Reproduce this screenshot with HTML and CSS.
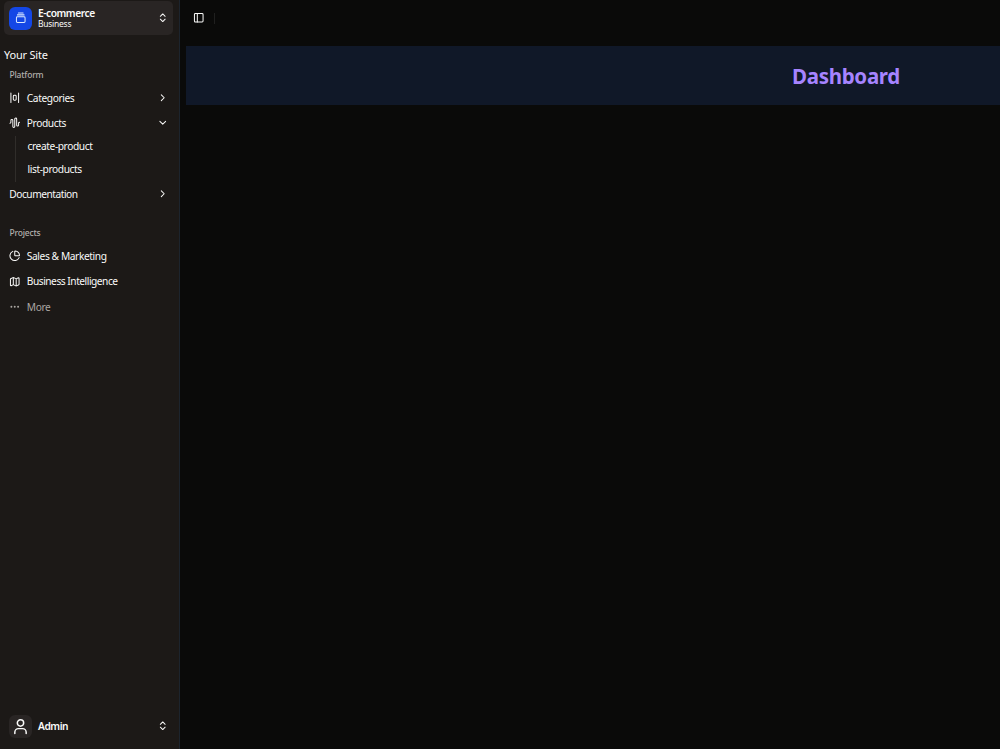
FILE: index.html
```html
<!DOCTYPE html>
<html lang="en">
<head>
<meta charset="utf-8">
<title>Dashboard</title>
<link rel="stylesheet" href="styles.css">
</head>
<body>
<div class="app">
  <aside class="sidebar">
    <div class="switcher team">
      <span class="logo blue"><svg class="icon" viewBox="0 0 24 24"><path d="M7 2h10M5 6h14"/><rect x="3" y="10" width="18" height="12" rx="2"/></svg></span>
      <span class="names"><b class="name commerce">E-commerce</b><span class="plan">Business</span></span>
      <svg class="icon end" viewBox="0 0 24 24"><path d="m7 15 5 5 5-5M7 9l5-5 5 5"/></svg>
    </div>
    <div class="site"><span>Your Site</span></div>
    <nav class="group">
      <div class="label">Platform</div>
      <a class="item"><svg class="icon" viewBox="0 0 24 24"><rect x="9" y="7" width="6" height="10" rx="2"/><path d="M4 22V2M20 22V2"/></svg><span class="text">Categories</span><svg class="icon end" viewBox="0 0 24 24"><path d="m9 18 6-6-6-6"/></svg></a>
      <a class="item"><svg class="icon" viewBox="0 0 24 24"><path d="M2 13a2 2 0 0 0 2-2V7a2 2 0 0 1 4 0v13a2 2 0 0 0 4 0V4a2 2 0 0 1 4 0v13a2 2 0 0 0 4 0v-4a2 2 0 0 1 2-2"/></svg><span class="text">Products</span><svg class="icon end" viewBox="0 0 24 24"><path d="m6 9 6 6 6-6"/></svg></a>
      <div class="sub"><a>create-product</a><a>list-products</a></div>
      <a class="item"><span class="text tight">Documentation</span><svg class="icon end" viewBox="0 0 24 24"><path d="m9 18 6-6-6-6"/></svg></a>
    </nav>
    <nav class="group projects">
      <div class="label">Projects</div>
      <a class="item"><svg class="icon" viewBox="0 0 24 24"><path d="M21 12c.552 0 1.005-.449.95-.998a10 10 0 0 0-8.953-8.951c-.55-.055-.998.398-.998.95v8a1 1 0 0 0 1 1z"/><path d="M21.21 15.89A10 10 0 1 1 8 2.83"/></svg><span class="text">Sales &amp; Marketing</span></a>
      <a class="item"><svg class="icon" viewBox="0 0 24 24"><path d="M14.106 5.553a2 2 0 0 0 1.788 0l3.659-1.83A1 1 0 0 1 21 4.619v12.764a1 1 0 0 1-.553.894l-4.553 2.277a2 2 0 0 1-1.788 0l-4.212-2.106a2 2 0 0 0-1.788 0l-3.659 1.83A1 1 0 0 1 3 19.381V6.618a1 1 0 0 1 .553-.894l4.553-2.277a2 2 0 0 1 1.788 0zM15 5.764v15M9 3.236v15"/></svg><span class="text tight">Business Intelligence</span></a>
      <a class="item more"><svg class="icon" viewBox="0 0 24 24"><circle cx="12" cy="12" r="1"/><circle cx="19" cy="12" r="1"/><circle cx="5" cy="12" r="1"/></svg><span class="text">More</span></a>
    </nav>
    <div class="switcher user">
      <span class="logo"><svg class="icon person" viewBox="0 0 24 24"><circle cx="12" cy="7" r="4.5"/><path d="M4 22v-2a5 5 0 0 1 5-5h6a5 5 0 0 1 5 5v2"/></svg></span>
      <b class="name admin">Admin</b>
      <svg class="icon end" viewBox="0 0 24 24"><path d="m7 15 5 5 5-5M7 9l5-5 5 5"/></svg>
    </div>
  </aside>
  <main class="main">
    <header class="topbar"><svg class="icon" viewBox="0 0 24 24"><rect x="3" y="3" width="18" height="18" rx="2"/><path d="M9 3v18"/></svg><span class="divider"></span></header>
    <section class="banner"><h1>Dashboard</h1></section>
  </main>
</div>
</body>
</html>
```
FILE: styles.css
```css
* { box-sizing: border-box; }
body { margin: 0; background: #0a0a09; color: #fafaf9; font-family: "Noto Sans", sans-serif; font-size: 10.2px; letter-spacing: -.4px; overflow: hidden; }
.app { display: flex; height: 749px; overflow: hidden; }
.sidebar { width: 180px; flex: none; display: flex; flex-direction: column; background: #1c1917; border-right: 1px solid #1c242d; padding: 1px 6px 6px 4px; }
.icon { width: 11.5px; height: 11.5px; flex: none; fill: none; stroke: currentColor; stroke-width: 2.1; stroke-linecap: round; stroke-linejoin: round; }
.end { margin-left: auto; }
.switcher { height: 34px; flex: none; display: flex; align-items: center; gap: 6px; padding: 0 5px 0 5px; border-radius: 5px; }
.team { background: #292524; }
.logo { width: 23px; height: 23px; display: grid; place-items: center; border-radius: 6px; background: #292524; }
.blue { background: #1447e6; color: #dbeafe; }
.person { width: 17px; height: 17px; }
.names { display: flex; flex-direction: column; }
.name { font-size: 10.2px; line-height: 11px; font-weight: 600; letter-spacing: -.45px; }
.plan { font-size: 8.5px; line-height: 10px; letter-spacing: -.25px; }
.site { margin-top: 11px; height: 18px; line-height: 17px; font-size: 11px; letter-spacing: -.2px; }
.group { display: flex; flex-direction: column; }
.label { height: 21px; line-height: 21px; padding-left: 5.5px; font-size: 8.5px; font-weight: 500; letter-spacing: -.2px; color: #b2afac; }
.item { height: 25.3px; display: flex; align-items: center; gap: 6px; padding: 0 5px 0 5.3px; }
.tight { letter-spacing: -.48px; }
.sub { margin-left: 11px; border-left: 1px solid #302d2a; padding-left: 11.5px; display: flex; flex-direction: column; height: 46px; line-height: 23px; }
.sub > a { height: 23px; line-height: 21px; }
.projects { margin-top: 15.5px; }
.more { color: #aaa6a2; }
.user { margin-top: auto; }
.main { flex: none; width: 1332px; padding: 0 6px; }
.topbar { height: 46.4px; padding: 0 7px 10px; display: flex; align-items: center; gap: 9.5px; }
.divider { width: 1px; height: 11px; background: #20201f; }
.banner { height: 59px; background: #101828; display: grid; place-items: center; }
h1 { margin: 0; font-size: 20.5px; line-height: 28px; letter-spacing: -.3px; color: #a684ff; font-weight: 700; }
```
